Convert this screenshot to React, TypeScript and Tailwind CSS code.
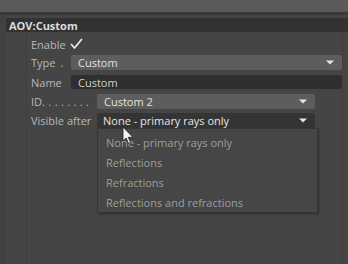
import React from "react";

const Arrow = () => (
  <svg width="8" height="5" viewBox="0 0 8 5" className="shrink-0">
    <path d="M0 0.5 L8 0.5 L4 4.5 Z" fill="#e6e6e6" />
  </svg>
);

export default function App() {
  const font = { fontFamily: '"Open Sans", "DejaVu Sans", sans-serif' };
  return (
    <div
      className="relative w-[348px] h-[264px] overflow-hidden bg-[#454545] text-[11px] leading-none"
      style={font}
    >
      <div className="h-[12px] bg-[#5a5a5a]" />
      <div className="h-[3px] bg-[#393939]" />
      <div className="flex h-[249px]">
        <div className="w-[6px] bg-[#414141]" />
        <div className="flex-1 flex flex-col pt-[3px]">
          <div className="h-[14px] bg-[#323232] flex items-center pl-[3px] font-bold text-[#dcdcdc] text-[11px]">
            AOV:Custom
          </div>
          <div className="flex-1 flex border-l border-[#3f3f3f] ml-[20px] mr-[5px] border-r">
            <div className="flex-1 flex flex-col pl-[4px] pr-[0px] text-[#b8b8b8]">
              {/* Enable */}
              <div className="mt-[5px] h-[14px] flex items-center">
                <span className="w-[39px]">Enable</span>
                <svg width="13" height="12" viewBox="0 0 13 12">
                  <path
                    d="M1.5 6.5 L4.5 10 L11.5 1.5"
                    stroke="#e8e8e8"
                    strokeWidth="1.8"
                    fill="none"
                    strokeLinecap="round"
                    strokeLinejoin="round"
                  />
                </svg>
              </div>
              {/* Type */}
              <div className="mt-[4px] h-[15px] flex items-center">
                <span className="w-[40px] flex">
                  <span>Type</span>
                  <span className="ml-[5px]">.</span>
                </span>
                <div className="flex-1 h-full rounded-[2px] bg-[#5d5d5d] flex items-center pl-[7px] pr-[8px] text-[#e2e2e2]">
                  <span className="flex-1">Custom</span>
                  <Arrow />
                </div>
              </div>
              {/* Name */}
              <div className="mt-[5px] h-[14px] flex items-center">
                <span className="w-[40px]">Name</span>
                <div className="flex-1 h-full rounded-[2px] bg-[#2f2f2f] flex items-center pl-[7px] text-[#cfcfcf]">
                  Custom
                </div>
              </div>
              {/* ID */}
              <div className="mt-[5px] h-[15px] flex items-center">
                <span className="w-[66px] flex">
                  <span>ID</span>
                  <span className="tracking-[3.4px]">........</span>
                </span>
                <div className="w-[218px] h-full rounded-[2px] bg-[#5d5d5d] flex items-center pl-[7px] pr-[8px] text-[#e2e2e2]">
                  <span className="flex-1">Custom 2</span>
                  <Arrow />
                </div>
              </div>
              {/* Visible after */}
              <div className="mt-[4px] h-[15px] flex items-center">
                <span className="w-[66px]">Visible after</span>
                <div className="relative w-[218px] h-full rounded-[2px] bg-[#343434] flex items-center pl-[6px] pr-[8px] text-[#e4e4e4]">
                  <span className="flex-1">None - primary rays only</span>
                  <Arrow />
                  <div className="absolute left-0 top-[15px] w-[221px] h-[85px] bg-[#464646] border border-[#363636] shadow-[1px_1px_2px_rgba(0,0,0,0.35)] flex flex-col pt-[4px] pl-[8px] text-[#9e9e9e]">
                    <div className="h-[20px] flex items-center">None - primary rays only</div>
                    <div className="h-[20px] flex items-center">Reflections</div>
                    <div className="h-[20px] flex items-center">Refractions</div>
                    <div className="h-[20px] flex items-center">Reflections and refractions</div>
                  </div>
                </div>
              </div>
            </div>
          </div>
        </div>
      </div>
      {/* cursor */}
      <svg
        className="absolute left-[122px] top-[126px]"
        width="12"
        height="19"
        viewBox="0 0 12 19"
      >
        <path
          d="M1 1 L1 15 L4.2 12 L6.5 17.5 L8.5 16.6 L6.3 11.3 L10.8 11.3 Z"
          fill="#f4f4f4"
          stroke="#222"
          strokeWidth="0.8"
        />
      </svg>
    </div>
  );
}
